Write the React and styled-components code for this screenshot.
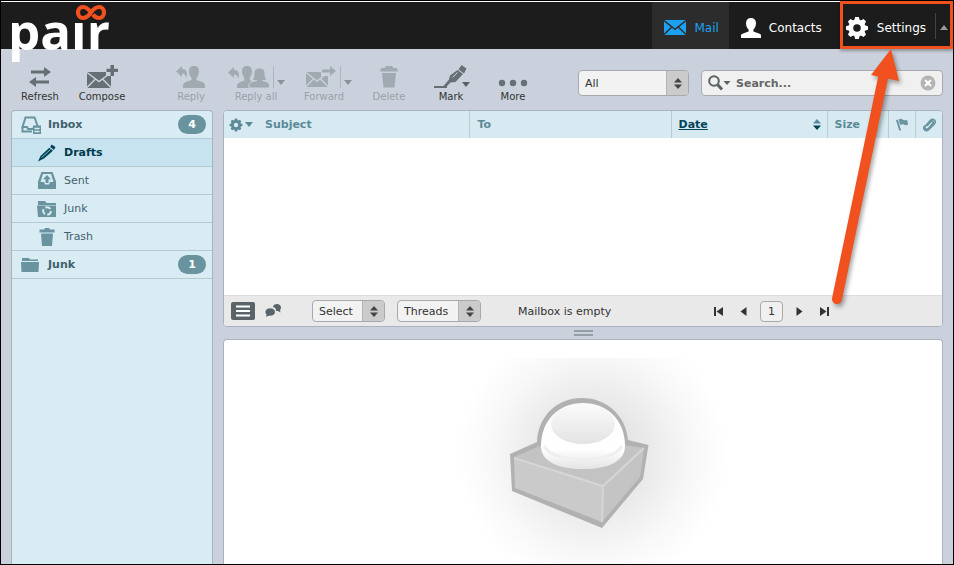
import React from "react";
import styled, { createGlobalStyle } from "styled-components";

const Caret = ({ color = "#6f787c", up }) => (
  <svg width="8" height="5" viewBox="0 0 8 5" fill={color} aria-hidden="true">
    <path d={up ? "M0 5h8L4 0z" : "M0 0h8L4 5z"} />
  </svg>
);

const UpDown = ({ top = "#444", bottom = "#444", size = 8 }) => (
  <svg width={size} height="11" viewBox="0 0 8 11" aria-hidden="true">
    <path d="M0 4.5h8L4 0z" fill={top} />
    <path d="M0 6.5h8L4 11z" fill={bottom} />
  </svg>
);

const Gear = ({ size, color, hole }) => (
  <svg width={size} height={size} viewBox="0 0 24 24" fill={color} aria-hidden="true">
    {[0, 45, 90, 135].map((a) => (
      <path key={a} d="M10.2 1h3.6l1.2 4v14l-1.2 4h-3.6L9 19V5z" transform={`rotate(${a} 12 12)`} />
    ))}
    <circle cx="12" cy="12" r="8.4" />
    <circle cx="12" cy="12" r="3.8" fill={hole} />
  </svg>
);

const Envelope = ({ width = 22, height = 15, color, line }) => (
  <svg width={width} height={height} viewBox="0 0 22 15" aria-hidden="true">
    <path d="M0 0h22v15H0z" fill={color} />
    <path d="M0 .5l11 8.8L22 .5M0 14.5l7.8-7.6M22 14.5l-7.8-7.6" fill="none" stroke={line} strokeWidth="1.4" />
  </svg>
);

const Person = ({ color = "#fff" }) => (
  <svg width="20" height="20" viewBox="0 0 20 20" fill={color} aria-hidden="true">
    <path d="M10 0c3.2 0 5 2 5 5.2 0 2.800-1.200 5-2.600 6.400v1.800c2.600 1 6 1.600 7.600 3.400V20H0v-3.200c1.600-1.800 5-2.400 7.600-3.400v-1.800C6.200 10.200 5 8 5 5.200 5 2 6.800 0 10 0z" />
  </svg>
);

const Logo = () => (
  <svg width="110" height="70" viewBox="0 0 110 70" overflow="visible" role="img" aria-label="pair">
    <text
      x="-1"
      y="48"
      fill="#fff"
      fontFamily="'Open Sans', 'Noto Sans', sans-serif"
      fontWeight="700"
      fontSize="51"
    >
      pair
    </text>
    <path d="M56 1h44v17H56z" fill="#1c1c1c" />
    <path
      d="M82 11c-3-5-5.500-6-8-6C71 5 69 7.500 69 10.500S71 16 74 16c3.500 0 5.500-2 8-5.500S87 5 90 5c3 0 5 2.500 5 5.500S93 16 90 16c-2.500 0-4.500-1.500-6-3.500"
      fill="none"
      stroke="#f1501f"
      strokeWidth="4.200"
    />
  </svg>
);

const toolIcons = {
  refresh: (
    <svg width="26" height="20" viewBox="0 0 26 20">
      <path d="M4 3.500h13V0l7 5-7 5V6.500H4zM22 13.500H9V10l-7 5 7 5v-3.500h13z" />
    </svg>
  ),
  compose: (
    <svg width="32" height="24" viewBox="0 0 32 24">
      <path d="M1 7h24v16H1z" />
      <path d="M1 7.500l12 9 12-9M1 22.500l8.500-8.500M25 22.500L16.500 14" fill="none" stroke="#cad1dc" strokeWidth="1.500" />
      <path d="M20 0h12v11H20z" fill="#cad1dc" />
      <path d="M24.500 0h3.500v3.800h4v3.200h-4v4h-3.500V7H20.500V3.800h4z" />
    </svg>
  ),
  reply: (
    <svg width="30" height="24" viewBox="0 0 30 24">
      <path d="M6 1v3c5 0 6 4 4 9-.2-3.200-1.500-4.500-4-4.500V12L0 6.500z" />
      <path d="M18 1c3.500 0 5 2 5 5.500 0 3-1.200 5-2.500 6.500v2c2.500 1.200 8 1.600 8.500 5v3H7v-3c.5-3.400 6-3.800 8.500-5v-2C14.200 11.500 13 9.500 13 6.500 13 3 14.500 1 18 1z" />
    </svg>
  ),
  replyall: (
    <svg width="42" height="24" viewBox="0 0 42 24">
      <path d="M6 2v3c5 0 6 4 4 9-.2-3.200-1.500-4.500-4-4.500V13L0 7.500z" />
      <path d="M19 1c3 0 5 1.800 5 5.500 0 2.500-1 4.500-2.200 6v2.500L26 18l-5 5H9v-3c.5-2.500 5-3.500 7.200-4.500V12.500C15 11 14 9 14 6.500 14 2.800 16 1 19 1z" />
      <path
        d="M31.500 3c4 0 5.500 2.500 5.500 6 0 2.500.5 4 1.500 5.500-1.500 1.200-2.500 1-4 1 3 1 6.500 1.500 7 4v3.500H21v-3.500c.5-2.500 5-3 7.500-4-1.500 0-3 .2-4-1C25.500 13 26 11.500 26 9c0-3.500 1.500-6 5.500-6z"
        stroke="#cad1dc"
        strokeWidth="1"
      />
    </svg>
  ),
  forward: (
    <svg width="40" height="22" viewBox="-8 0 40 22">
      <path d="M1 6h22v15H1z" />
      <path d="M1 6.500l11 8.500 11-8.500M1 20.500l8-8M23 20.500l-8-8" fill="none" stroke="#cad1dc" strokeWidth="1.400" />
      <path d="M16 0h16v10H16z" fill="#cad1dc" />
      <path d="M17 3.500h8V0l6 5-6 5V6.500h-8z" />
    </svg>
  ),
  delete: (
    <svg width="20" height="22" viewBox="0 0 20 22">
      <path d="M7 0h6l1.500 2H18l1 3.500H1L2 2h3.500zM3 7h14l-1.500 14.500h-11z" />
    </svg>
  ),
  mark: (
    <svg width="34" height="24" viewBox="0 0 34 24">
      <path d="M27.500 0l5 3.500-2.500 5-5.500-4zM23.500 5l5.500 4L21.500 17l-5 .5-3.500 3.500h-3.500l5.500-6.500 1-4z" />
      <path d="M18.500 12.500l5-5" stroke="#cad1dc" strokeWidth="1" />
      <path d="M0 21h11l2-.5V23H0z" />
    </svg>
  ),
  more: (
    <svg width="30" height="24" viewBox="0 0 30 24">
      <circle cx="4" cy="18" r="3.200" />
      <circle cx="15" cy="18" r="3.200" />
      <circle cx="26" cy="18" r="3.200" />
    </svg>
  ),
};

const folderIcons = {
  inbox: (
    <svg width="20" height="18" viewBox="0 0 20 18">
      <path d="M4.500 1.500h9L17 11v0H13l-1 2H7l-1-2H1.500zM1.500 11v4.500H11" fill="none" stroke="currentColor" strokeWidth="2" />
      <path d="M12 9.500h8V18h-8z" />
      <path d="M13.500 12.500h5M13.500 15.500h5" stroke="#d9ecf4" strokeWidth="1.500" />
    </svg>
  ),
  drafts: (
    <svg width="20" height="18" viewBox="0 0 20 18">
      <path d="M14.500 0.500l4 2.500-1.500 3-3.800-3zM12.300 3.800l3.700 3L7 14.500 1 17.500l2.500-5.500z" />
      <path d="M4.500 13.500l9-8" stroke="#8bb4c2" strokeWidth="1" />
    </svg>
  ),
  sent: (
    <svg width="20" height="18" viewBox="0 0 20 18">
      <path d="M4.500 0h11L19 9.500V17H1V9.500z" />
      <path d="M6 2h8l2.500 8H13l-1 2.500H8L7 10H3.500z" fill="#d9ecf4" />
      <path d="M10 3l4 4.200h-2.500V11h-3V7.200H6z" />
    </svg>
  ),
  recycle: (
    <svg width="20" height="18" viewBox="0 0 20 18">
      <path d="M1 1h7l1.500 2H19v2H1zM0 5.500h19V17H1z" />
      <circle cx="10" cy="11" r="3.800" fill="none" stroke="#d9ecf4" strokeWidth="2" strokeDasharray="5.500 2.400" />
    </svg>
  ),
  trash: (
    <svg width="20" height="18" viewBox="0 0 20 18">
      <path d="M8 0h4l1 1.500h4.500v3h-15v-3H7zM4 5.500h12L15 18H5z" />
    </svg>
  ),
  folder: (
    <svg width="20" height="18" viewBox="0 0 20 18">
      <path d="M1 2h7l1 1.500h8V5H1zM0 6h18l-.5 10H.5z" />
    </svg>
  ),
};

const Watermark = () => (
  <svg width="280" height="206" viewBox="443 358 280 206" role="img" aria-label="No message selected">
    <defs>
      <radialGradient id="halo" gradientUnits="userSpaceOnUse" cx="593" cy="455" r="134">
        <stop offset="0" stopColor="#dadada" />
        <stop offset="0.400" stopColor="#e9e9e9" />
        <stop offset="0.750" stopColor="#f8f8f8" />
        <stop offset="1" stopColor="#fff" />
      </radialGradient>
      <linearGradient id="dome" x1="0" y1="0" x2="0" y2="1">
        <stop offset="0" stopColor="#fbfbfb" />
        <stop offset="0.700" stopColor="#fff" />
        <stop offset="1" stopColor="#e4e4e4" />
      </linearGradient>
      <linearGradient id="lens" x1="0" y1="0" x2="0" y2="1">
        <stop offset="0" stopColor="#fbfbfb" />
        <stop offset="1" stopColor="#e3e3e3" />
      </linearGradient>
    </defs>
    <path d="M443 358h280v206H443z" fill="url(#halo)" />
    <path d="M510 454l27-12c1-26 20-44 45-44s44 18 46 42l20.500 5-5.500 34-41 49-90-37z" fill="#b1b1b1" />
    <path d="M514 457l28-12h82l20 3-41 38z" fill="#c3c3c3" />
    <path d="M514 458l89 28-1 36-87-34z" fill="#cacaca" />
    <path d="M603 486l41-38-4 29-38 45z" fill="#c4c4c4" />
    <path d="M514 458l89 28 41-38M603 486l-1 36" fill="none" stroke="#d6d6d6" strokeWidth="2" />
    <path d="M541 446c0-26 18-43 42-43s42 17 42 43c0 15-16 23-42 23s-42-8-42-23z" fill="url(#dome)" />
    <path d="M544 446c9 18 69 18 78 0" fill="none" stroke="#efefef" strokeWidth="3" />
    <ellipse cx="583" cy="424" rx="32" ry="20" fill="url(#lens)" />
  </svg>
);

const tools = [
  { id: "refresh", label: "Refresh" },
  { id: "compose", label: "Compose" },
  { id: "reply", label: "Reply", disabled: true, spaced: true },
  { id: "replyall", label: "Reply all", disabled: true, menu: true },
  { id: "forward", label: "Forward", disabled: true, menu: true },
  { id: "delete", label: "Delete", disabled: true },
  { id: "mark", label: "Mark", caret: true },
  { id: "more", label: "More" },
];

const folders = [
  { icon: "inbox", name: "Inbox", count: 4, root: true },
  { icon: "drafts", name: "Drafts", active: true },
  { icon: "sent", name: "Sent" },
  { icon: "recycle", name: "Junk" },
  { icon: "trash", name: "Trash" },
  { icon: "folder", name: "Junk", count: 1, root: true },
];

const SelectBox = ({ label, value, width, tall }) => (
  <SelectWrap $width={width} $tall={tall}>
    <Select aria-label={label} defaultValue={value}>
      <option>{value}</option>
    </Select>
    <SelectArrow>
      <UpDown />
    </SelectArrow>
  </SelectWrap>
);

const App = () => {
  return (
    <Page>
      <GlobalStyle />
      <Header>
        <Brand href="#">
          <Logo />
        </Brand>
        <Nav>
          <NavLink href="#mail" $active>
            <Envelope color="#1ea0f0" line="#2c2c2c" />
            Mail
          </NavLink>
          <NavLink href="#contacts">
            <Person />
            Contacts
          </NavLink>
          <SettingsItem>
            <NavLink href="#settings" $tight>
              <Gear size="24" color="#fff" hole="#1c1c1c" />
              Settings
            </NavLink>
            <Toggle aria-label="Toggle header">
              <Caret up color="#999" />
            </Toggle>
            <Frame />
          </SettingsItem>
        </Nav>
      </Header>

      <Toolbar>
        <Tools>
          {tools.map((t) => (
            <Tool key={t.id} disabled={t.disabled} $spaced={t.spaced} $wide={t.menu}>
              <ToolIcon>
                {toolIcons[t.id]}
                {t.menu && (
                  <MenuMark>
                    <Caret color="#8a9297" />
                  </MenuMark>
                )}
                {t.caret && (
                  <CaretMark>
                    <Caret color="#5a6266" />
                  </CaretMark>
                )}
              </ToolIcon>
              {t.label}
            </Tool>
          ))}
        </Tools>
        <Filters>
          <SelectBox label="Filter" value="All" width={111} tall />
          <Search>
            <IconButton aria-label="Search options">
              <svg width="24" height="16" viewBox="0 0 24 16">
                <circle cx="6" cy="6" r="4.800" fill="none" stroke="#5a6266" strokeWidth="2" />
                <path d="M9.500 9.500l4.500 5" stroke="#5a6266" strokeWidth="3" />
                <path d="M15.500 6h7L19 10z" fill="#5a6266" />
              </svg>
            </IconButton>
            <SearchInput type="text" placeholder="Search..." aria-label="Search" />
            <IconButton aria-label="Clear search">
              <svg width="16" height="16" viewBox="0 0 16 16">
                <circle cx="8" cy="8" r="7.500" fill="#b4b4b4" />
                <path d="M5 5l6 6M11 5l-6 6" stroke="#fff" strokeWidth="2" />
              </svg>
            </IconButton>
          </Search>
        </Filters>
      </Toolbar>

      <Main>
        <Sidebar>
          {folders.map((f, i) => (
            <Folder key={i} href={`#folder-${i}`} $root={f.root} $active={f.active}>
              <FolderIcon $active={f.active}>{folderIcons[f.icon]}</FolderIcon>
              <FolderName>{f.name}</FolderName>
              {f.count && <Badge>{f.count}</Badge>}
            </Folder>
          ))}
        </Sidebar>

        <Content>
          <ListPane>
            <ListBody>
              <Table>
                <colgroup>
                  <Col $width="34px" />
                  <Col />
                  <Col $width="28%" />
                  <Col $width="156px" />
                  <Col $width="61px" />
                  <Col $width="27px" />
                  <Col $width="27px" />
                </colgroup>
                <thead>
                  <tr>
                    <Th $plain>
                      <HeadButton aria-label="List options">
                        <Gear size="14" color="#5b8a97" hole="#d7e9f1" />
                        <Caret color="#5b8a97" />
                      </HeadButton>
                    </Th>
                    <Th $plain>Subject</Th>
                    <Th>To</Th>
                    <Th>
                      <Sorted>
                        <SortLink href="#date">Date</SortLink>
                        <UpDown top="#5b8a97" bottom="#004458" />
                      </Sorted>
                    </Th>
                    <Th>Size</Th>
                    <Th aria-label="Flagged">
                      <svg width="13" height="14" viewBox="0 0 14 14" fill="#69939e">
                        <path d="M0 2l2-1 3.500 12h-2zM3 1c3-2 4 1 6 1 1 0 2 0 3-.5l1 5c-2 1.500-3 .5-4.500 0S6 6 4.500 7z" />
                      </svg>
                    </Th>
                    <Th aria-label="Attachment">
                      <svg width="13" height="14" viewBox="0 0 14 14" fill="none" stroke="#69939e" strokeWidth="1.700">
                        <path d="M4 8l4.500-4.500c1.500-1.500 3.500.5 2 2L6 10.500c-2.500 2.500-5.500-.5-3-3L8 2c3-3 7 1 4 4l-6 6c-3 3-7-1-4-4" />
                      </svg>
                    </Th>
                  </tr>
                </thead>
              </Table>
            </ListBody>
            <ListFooter>
              <IconButton aria-label="List view">
                <svg width="24" height="18" viewBox="0 0 24 18">
                  <rect width="24" height="18" rx="2" fill="#5a6468" />
                  <path d="M5 4.500h14M5 9h14M5 13.500h14" stroke="#fff" strokeWidth="2" />
                </svg>
              </IconButton>
              <IconButton aria-label="Thread view" $gap>
                <svg width="16" height="14" viewBox="0 0 16 14" fill="#5a6468">
                  <path d="M8 3c0-2 2-3 4-3s4 1.500 4 3.500c0 1.500-.6 2-1 2.500l.5 2.500L13 7c-1 0-1.500 0-2-.2C11 4.500 10 3.500 8 3z" />
                  <ellipse cx="5.200" cy="8" rx="4.800" ry="3.800" />
                  <path d="M2 9l-1 4 4-2z" />
                </svg>
              </IconButton>
              <Selects>
                <SelectBox label="Select messages" value="Select" width={73} />
                <SelectBox label="Threads" value="Threads" width={84} />
              </Selects>
              <Status>Mailbox is empty</Status>
              <Pager>
                <PageButton aria-label="First page">
                  <svg width="9" height="9" viewBox="0 0 9 9"><path d="M0 0h2v9H0zM9 0v9L2.500 4.500z" /></svg>
                </PageButton>
                <PageButton aria-label="Previous page">
                  <svg width="9" height="9" viewBox="0 0 9 9"><path d="M7.500 0v9L1.500 4.500z" /></svg>
                </PageButton>
                <PageInput type="text" defaultValue="1" aria-label="Page" />
                <PageButton aria-label="Next page">
                  <svg width="9" height="9" viewBox="0 0 9 9"><path d="M1.500 0v9l6-4.500z" /></svg>
                </PageButton>
                <PageButton aria-label="Last page">
                  <svg width="9" height="9" viewBox="0 0 9 9"><path d="M7 0h2v9H7zM0 0v9l6.500-4.500z" /></svg>
                </PageButton>
              </Pager>
            </ListFooter>
          </ListPane>
          <Splitter>
            <Grip />
          </Splitter>
          <Preview>
            <Watermark />
          </Preview>
        </Content>
      </Main>

      <Pointer width="90" height="270" viewBox="820 45 90 270" aria-hidden="true">
        <path d="M837 299L883 78" stroke="#f1501f" strokeWidth="10" strokeLinecap="round" />
        <path d="M891 49l8 32-28-6z" fill="#f1501f" />
      </Pointer>
    </Page>
  );
};

export default App;

const GlobalStyle = createGlobalStyle`
  * {
    box-sizing: border-box;
  }

  body {
    margin: 0;
    font-family: Verdana, "DejaVu Sans", sans-serif;
    font-size: 11px;
    color: #333;
  }

  button, input, select {
    font: inherit;
    color: inherit;
  }

  svg {
    display: block;
    flex-shrink: 0;
  }
`;

const Page = styled.div`
  position: relative;
  min-height: 100vh;
  display: flex;
  flex-direction: column;
  border: 1px solid #000;
  background-color: #cad1dc;
`;

const Header = styled.header`
  height: 48px;
  display: flex;
  justify-content: space-between;
  border-top: 1px solid #fff;
  background-color: #1c1c1c;
`;

const Brand = styled.a`
  padding-left: 8px;
  height: 48px;
  overflow: visible;
`;

const Nav = styled.nav`
  display: flex;
`;

const NavLink = styled.a`
  display: flex;
  align-items: center;
  gap: 8px;
  padding: ${({ $tight }) => ($tight ? "4px 9px 0 5px" : "4px 10px 0 12px")};
  font-size: 12px;
  text-decoration: none;
  color: ${({ $active }) => ($active ? "#1ea0f0" : "#fff")};
  background-color: ${({ $active }) => ($active ? "#2c2c2c" : "transparent")};
`;

const SettingsItem = styled.div`
  position: relative;
  display: flex;
  align-items: center;
  margin-left: 8px;

  ${NavLink} {
    height: 100%;
  }
`;

const Toggle = styled.button`
  height: 26px;
  padding: 4px 5px 0 4px;
  border: 0;
  border-left: 1px solid #444;
  background: none;
`;

const Frame = styled.span`
  position: absolute;
  inset: -1px 0 0 0;
  border: 3px solid #f1501f;
  box-shadow: 0 2px 3px rgba(0, 0, 0, 0.3);
  pointer-events: none;
`;

const Toolbar = styled.div`
  display: flex;
  justify-content: space-between;
  height: 61px;
  padding: 0 10px 0 8px;
`;

const Tools = styled.div`
  display: flex;
`;

const Tool = styled.button`
  width: ${({ $wide }) => ($wide ? "68px" : "62px")};
  margin-left: ${({ $spaced }) => ($spaced ? "27px" : "0")};
  padding: 15px 0 0;
  display: flex;
  flex-direction: column;
  align-items: center;
  border: 0;
  background: none;
  font-size: 10px;
  line-height: 14px;
  color: #333;
  fill: #656f74;

  &:disabled {
    color: #9aa1a8;
    fill: #a2aab1;
  }
`;

const ToolIcon = styled.span`
  position: relative;
  display: flex;
  align-items: center;
  justify-content: center;
  height: 26px;
`;

const MenuMark = styled.span`
  height: 22px;
  margin-left: 3px;
  padding: 14px 0 0 3px;
  border-left: 1px solid #aeb5bd;
`;

const CaretMark = styled.span`
  position: absolute;
  right: -2px;
  bottom: 3px;
`;

const Filters = styled.div`
  display: flex;
  gap: 12px;
  padding-top: 21px;
`;

const SelectWrap = styled.div`
  display: grid;
  grid-template-columns: 1fr 22px;
  width: ${({ $width }) => $width}px;
  height: ${({ $tall }) => ($tall ? "26px" : "22px")};
  border: 1px solid #a6a9ad;
  border-radius: 4px;
  background-color: #f2f2f2;
  overflow: hidden;
`;

const Select = styled.select`
  grid-area: 1 / 1 / 2 / 3;
  width: 100%;
  padding: 0 22px 0 6px;
  border: 0;
  background: none;
  appearance: none;
`;

const SelectArrow = styled.span`
  grid-area: 1 / 2 / 2 / 3;
  display: flex;
  align-items: center;
  justify-content: center;
  border-left: 1px solid #b4b4b4;
  background-color: #cbcbcb;
  pointer-events: none;
`;

const Search = styled.div`
  display: flex;
  align-items: center;
  width: 242px;
  height: 26px;
  padding: 0 6px;
  border: 1px solid #a6a9ad;
  border-radius: 4px;
  background-color: #f0f0f0;
`;

const SearchInput = styled.input`
  flex: 1;
  min-width: 0;
  padding: 0 4px;
  border: 0;
  background: none;
  font-weight: bold;

  &::placeholder {
    color: #666;
    opacity: 1;
  }
`;

const IconButton = styled.button`
  margin-left: ${({ $gap }) => ($gap ? "10px" : "0")};
  padding: 0;
  border: 0;
  background: none;
`;

const Main = styled.main`
  flex: 1;
  display: flex;
  gap: 10px;
  padding: 0 10px;
`;

const Sidebar = styled.nav`
  width: 202px;
  border: 1px solid #a4b6c0;
  border-bottom: 0;
  border-radius: 4px 4px 0 0;
  background-color: #d9ecf4;
`;

const Folder = styled.a`
  display: flex;
  align-items: center;
  gap: 7px;
  height: 28px;
  padding: 0 6px 0 ${({ $root }) => ($root ? "9px" : "25px")};
  border-bottom: 1px solid #b4cbd5;
  text-decoration: none;
  font-weight: ${({ $root, $active }) => ($root || $active ? "bold" : "normal")};
  color: ${({ $active }) => ($active ? "#003a4d" : "#3f606d")};
  background-color: ${({ $active }) => ($active ? "#c7e3ef" : "transparent")};
`;

const FolderIcon = styled.span`
  color: ${({ $active }) => ($active ? "#004458" : "#69939e")};
  fill: currentColor;
`;

const FolderName = styled.span`
  flex: 1;
`;

const Badge = styled.span`
  width: 28px;
  line-height: 19px;
  border-radius: 10px;
  text-align: center;
  font-weight: bold;
  color: #fff;
  background-color: #69939e;
`;

const Content = styled.section`
  flex: 1;
  min-width: 0;
  display: flex;
  flex-direction: column;
`;

const ListPane = styled.div`
  border: 1px solid #a9b3bd;
  border-radius: 4px;
  background-color: #fff;
  overflow: hidden;
`;

const ListBody = styled.div`
  min-height: 184px;
`;

const Table = styled.table`
  width: 100%;
  table-layout: fixed;
  border-collapse: collapse;
`;

const Col = styled.col`
  width: ${({ $width }) => $width || "auto"};
`;

const Th = styled.th`
  height: 27px;
  padding: 0 6px 0 7px;
  border-left: ${({ $plain }) => ($plain ? "0" : "1px solid #b4cbd5")};
  text-align: left;
  color: #5b8a97;
  background-color: #d7e9f1;
`;

const HeadButton = styled.button`
  display: flex;
  align-items: center;
  gap: 2px;
  margin-left: -2px;
  padding: 0;
  border: 0;
  background: none;
`;

const Sorted = styled.div`
  display: flex;
  align-items: center;
  justify-content: space-between;
`;

const SortLink = styled.a`
  color: #004458;
`;

const ListFooter = styled.div`
  display: flex;
  align-items: center;
  height: 31px;
  padding: 0 105px 0 7px;
  border-top: 1px solid #ddd;
  background-color: #e9e9e9;
`;

const Selects = styled.div`
  display: flex;
  gap: 12px;
  margin-left: 31px;
`;

const Status = styled.span`
  margin-left: 37px;
`;

const Pager = styled.div`
  display: flex;
  align-items: center;
  margin-left: auto;
`;

const PageButton = styled.button`
  display: flex;
  justify-content: center;
  width: 25px;
  padding: 0;
  border: 0;
  background: none;
  fill: #333;
`;

const PageInput = styled.input`
  width: 23px;
  height: 21px;
  margin: 0 4px;
  padding: 0;
  border: 1px solid #a9a9a9;
  border-radius: 4px;
  text-align: center;
  background-color: #f0f0f0;
`;

const Splitter = styled.div`
  display: flex;
  align-items: center;
  justify-content: center;
  height: 12px;
`;

const Grip = styled.span`
  width: 19px;
  height: 6px;
  border: solid #949ca4;
  border-width: 2px 0;
`;

const Preview = styled.div`
  flex: 1;
  display: flex;
  justify-content: center;
  padding-top: 18px;
  border: 1px solid #a9b3bd;
  border-bottom: 0;
  border-radius: 4px 4px 0 0;
  background-color: #fff;
`;

const Pointer = styled.svg`
  position: absolute;
  top: 44px;
  right: 43px;
  fill: none;
  filter: drop-shadow(2px 3px 2px rgba(0, 0, 0, 0.35));
  pointer-events: none;
`;
